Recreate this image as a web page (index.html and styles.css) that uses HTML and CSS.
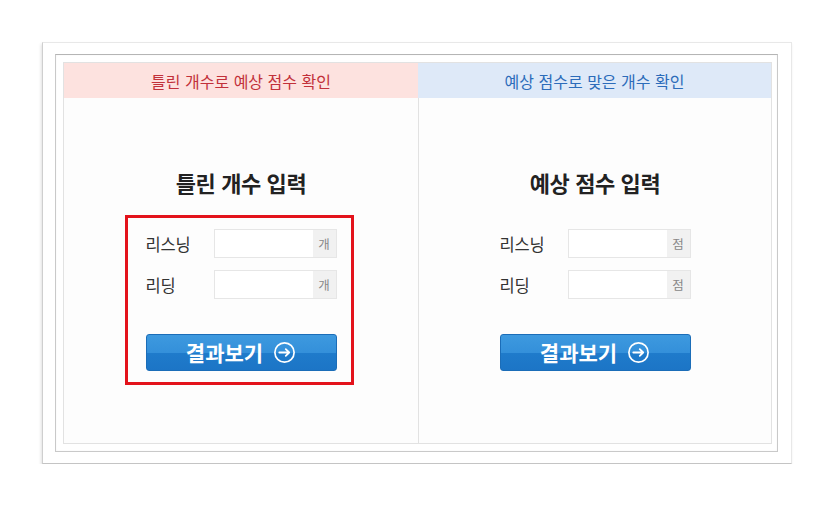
FILE: index.html
```html
<!DOCTYPE html>
<html lang="ko">
<head>
<meta charset="utf-8">
<title>토익 점수 계산기</title>
<link rel="stylesheet" href="styles.css">
</head>
<body>
<div class="frame">
  <div class="inner">
    <div class="panel">
      <div class="col">
        <div class="head head-red">틀린 개수로 예상 점수 확인</div>
        <div class="body">
          <h2 class="title">틀린 개수 입력</h2>
          <div class="form form-marked">
            <div class="row">
              <span class="label">리스닝</span>
              <span class="field"><span class="blank"></span><span class="unit">개</span></span>
            </div>
            <div class="row">
              <span class="label">리딩</span>
              <span class="field"><span class="blank"></span><span class="unit">개</span></span>
            </div>
            <button class="btn">결과보기
              <svg class="ico" viewBox="0 0 22 22" width="23" height="23"><circle cx="11" cy="11" r="9.2" fill="none" stroke="#fff" stroke-width="1.6"/><path d="M6 11h9.5M12.2 7.8L15.5 11l-3.3 3.2" fill="none" stroke="#fff" stroke-width="1.7" stroke-linecap="round" stroke-linejoin="round"/></svg>
            </button>
          </div>
        </div>
      </div>
      <div class="col">
        <div class="head head-blue">예상 점수로 맞은 개수 확인</div>
        <div class="body body-right">
          <h2 class="title">예상 점수 입력</h2>
          <div class="form">
            <div class="row">
              <span class="label">리스닝</span>
              <span class="field"><span class="blank"></span><span class="unit">점</span></span>
            </div>
            <div class="row">
              <span class="label">리딩</span>
              <span class="field"><span class="blank"></span><span class="unit">점</span></span>
            </div>
            <button class="btn">결과보기
              <svg class="ico" viewBox="0 0 22 22" width="23" height="23"><circle cx="11" cy="11" r="9.2" fill="none" stroke="#fff" stroke-width="1.6"/><path d="M6 11h9.5M12.2 7.8L15.5 11l-3.3 3.2" fill="none" stroke="#fff" stroke-width="1.7" stroke-linecap="round" stroke-linejoin="round"/></svg>
            </button>
          </div>
        </div>
      </div>
    </div>
  </div>
</div>
</body>
</html>
```
FILE: styles.css
```css
* { box-sizing: border-box; }
html, body { background: #ffffff; }
body {
  margin: 0;
  padding: 42px 0 0 42px;
  font-family: "Noto Sans CJK KR", "Noto Sans", sans-serif;
  color: #333;
}
.frame {
  width: 750px;
  background: #fff;
  border: 1px solid #e8e8e8;
  border-left-color: #cfcfcf;
  border-bottom-color: #c4c4c4;
  box-shadow: -1px 2px 3px rgba(0,0,0,0.12);
  padding: 11px 13px 11px 12px;
}
.inner {
  border: 1px solid #c9c9c9;
  border-top-color: #b5b5b5;
  box-shadow: inset 0 0 2px rgba(0,0,0,0.06);
  padding: 7px 5px 7px 7px;
  background: #fff;
}
.panel {
  display: grid;
  grid-template-columns: 354px 1fr;
  border: 1px solid #e2e2e2;
  background: #fdfdfd;
}
.col { display: flex; flex-direction: column; }
.head {
  height: 35px;
  display: flex;
  align-items: center;
  justify-content: center;
  font-size: 16px;
  letter-spacing: 0;
}
.head-red { background: #fde2df; color: #c2313a; }
.head-blue { background: #dee9f8; color: #2c6cba; }
.body {
  height: 345px;
  display: flex;
  flex-direction: column;
  align-items: center;
  padding-top: 68px;
}
.body-right { border-left: 1px solid #e2e2e2; }
.title {
  margin: 0;
  font-size: 22px;
  line-height: 32px;
  font-weight: 700;
  color: #222;
  letter-spacing: -0.4px;
}
.form {
  margin-top: 17px;
  border: 3px solid transparent;
  padding: 11px 16px;
  width: 229px;
  display: flex;
  flex-direction: column;
}
.form-marked {
  border-color: #e3121b;
  padding: 11px 14px 11px 18px;
  margin-right: 4px;
}
.row {
  display: flex;
  align-items: center;
  height: 29px;
  margin-bottom: 12px;
}
.label {
  width: 68px;
  font-size: 16.5px;
  color: #333;
  letter-spacing: -0.2px;
}
.field {
  display: flex;
  width: 123px;
  height: 29px;
  border: 1px solid #e6e6e6;
  background: #fff;
}
.blank { flex: 1; }
.unit {
  width: 23px;
  background: #f1f1f1;
  color: #888;
  font-size: 12.5px;
  display: flex;
  align-items: center;
  justify-content: center;
}
.btn {
  margin-top: 23px;
  width: 191px;
  height: 37px;
  border: 1px solid #1b6db8;
  border-radius: 3px;
  background: linear-gradient(#3d99df 0%, #3490da 50%, #1f7bcb 50%, #1c75c6 100%);
  color: #fff;
  font-family: "Noto Sans CJK KR", "Noto Sans", sans-serif;
  font-size: 21px;
  font-weight: 700;
  display: flex;
  align-items: center;
  justify-content: center;
  gap: 10px;
  padding: 0 0 2px 0;
  letter-spacing: 0;
}
.ico { display: block; margin-top: 2px; }
```
